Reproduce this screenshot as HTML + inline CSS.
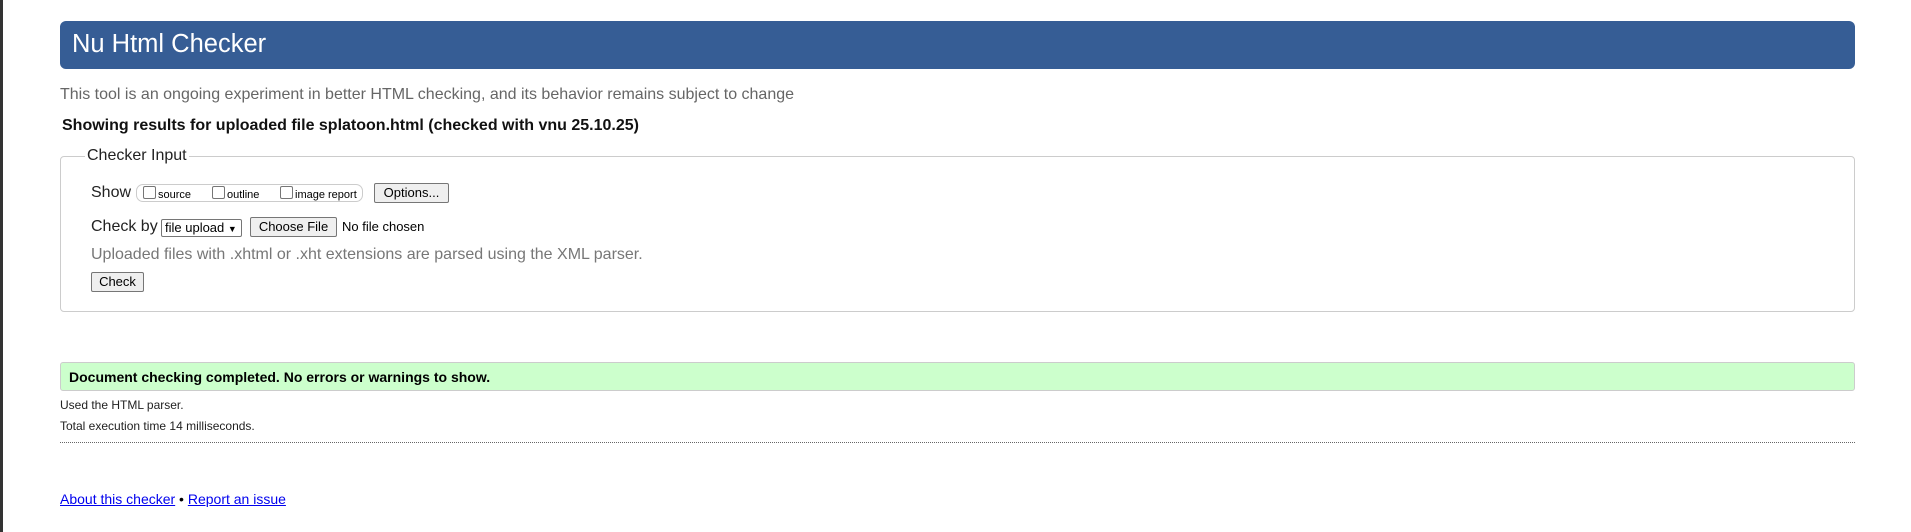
<!DOCTYPE html>
<html><head><meta charset="utf-8"><style>
html,body{margin:0;padding:0;background:#fff;width:1911px;height:532px;overflow:hidden;font-family:"Liberation Sans",Arial,sans-serif;}
.bar{position:absolute;left:0;top:0;width:3px;height:532px;background:#333;}
.a{position:absolute;white-space:nowrap;}
.hdr{left:60px;top:21px;width:1795px;height:48px;background:#365d95;border-radius:6px;}
.hdr span{position:absolute;left:12px;top:9px;color:#fff;font-size:25.5px;}
fieldset{position:absolute;left:60px;top:147px;width:1795px;height:165px;margin:0;padding:0;border:1px solid #ccc;border-radius:4px;box-sizing:border-box;}
legend{margin-left:24px;padding:0 2px;font-size:16px;color:#222;}
.btn{position:absolute;border:1px solid #767676;background:#efefef;border-radius:2px;font-size:13px;color:#000;box-sizing:border-box;text-align:center;}
.cb{display:inline-block;width:11px;height:11px;border:1px solid #767676;border-radius:2px;vertical-align:-1px;margin-right:2px;background:#fff;}
.grp{position:absolute;left:136px;top:184px;width:227px;height:18px;border:1px solid #ccc;border-radius:7px;box-sizing:border-box;font-size:11px;}
.grp span{position:absolute;top:1px;}
.ok{left:60px;top:362px;width:1795px;height:29px;background:#ccffcc;border:1px solid #ccc;border-radius:3px;box-sizing:border-box;}
a{color:#00e;text-decoration:underline;}
</style></head><body>
<div class="bar"></div>
<div class="a hdr"><span>Nu Html Checker</span></div>
<div class="a" style="left:60px;top:86px;font-size:16px;color:#666;">This tool is an ongoing experiment in better HTML checking, and its behavior remains subject to change</div>
<div class="a" style="left:62px;top:117px;font-size:16px;font-weight:bold;color:#111;">Showing results for uploaded file splatoon.html (checked with vnu 25.10.25)</div>
<fieldset><legend>Checker Input</legend></fieldset>
<div class="a" style="left:91px;top:184px;font-size:16px;color:#222;">Show</div>
<div class="grp"><span style="left:6px"><i class="cb"></i>source</span><span style="left:75px"><i class="cb"></i>outline</span><span style="left:143px"><i class="cb"></i>image report</span></div>
<div class="btn" style="left:374px;top:183px;width:75px;height:20px;line-height:18px;">Options...</div>
<div class="a" style="left:91px;top:218px;font-size:16px;color:#222;">Check by</div>
<div class="a" style="left:161px;top:219px;width:81px;height:18px;border:1px solid #767676;border-radius:2px;box-sizing:border-box;font-size:13px;line-height:16px;padding-left:3px;">file upload <span style="font-size:9px;">&#9660;</span></div>
<div class="btn" style="left:250px;top:217px;width:87px;height:20px;line-height:18px;">Choose File</div>
<div class="a" style="left:342px;top:219px;font-size:13px;">No file chosen</div>
<div class="a" style="left:91px;top:246px;font-size:16px;color:#777;">Uploaded files with .xhtml or .xht extensions are parsed using the XML parser.</div>
<div class="btn" style="left:91px;top:272px;width:53px;height:20px;line-height:18px;">Check</div>
<div class="a ok"><span style="position:absolute;left:8px;top:6px;font-size:14px;font-weight:bold;">Document checking completed. No errors or warnings to show.</span></div>
<div class="a" style="left:60px;top:398px;font-size:12px;color:#222;">Used the HTML parser.</div>
<div class="a" style="left:60px;top:419px;font-size:12px;color:#222;">Total execution time 14 milliseconds.</div>
<div class="a" style="left:60px;top:442px;width:1795px;border-top:1px dotted #666;"></div>
<div class="a" style="left:60px;top:491px;font-size:14px;"><a>About this checker</a> • <a>Report an issue</a></div>
</body></html>
